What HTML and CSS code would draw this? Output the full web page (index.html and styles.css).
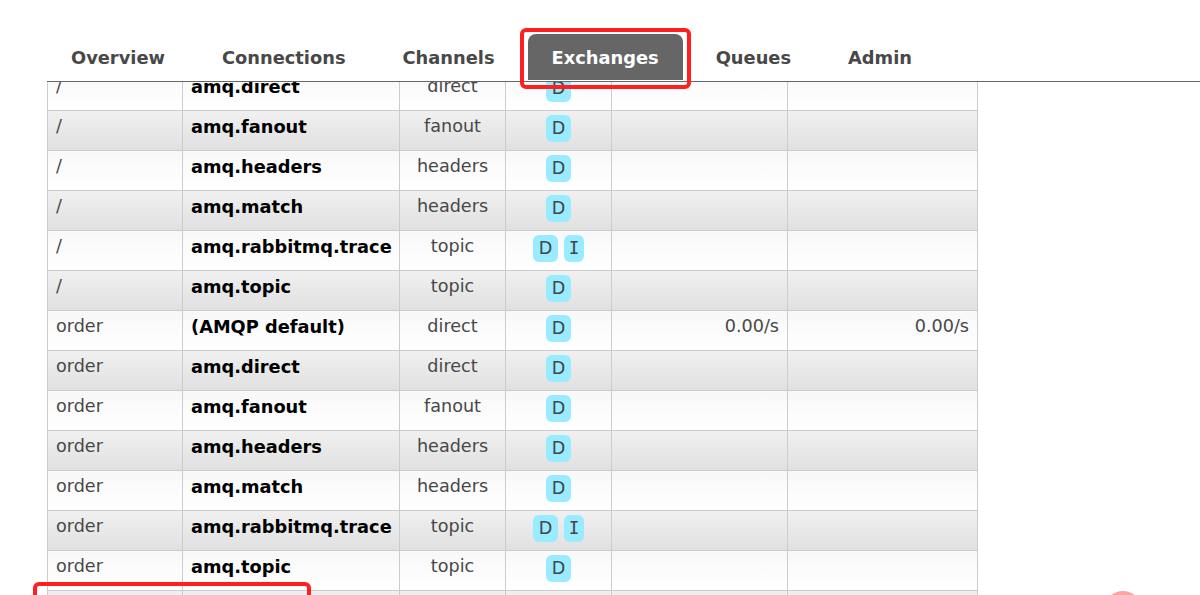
FILE: index.html
```html
<!DOCTYPE html>
<html>
<head>
<meta charset="utf-8">
<title>Exchanges</title>
<link rel="stylesheet" href="styles.css">
</head>
<body>
<div class="page">
  <header class="menu">
    <nav class="tabs">
      <a class="tab">Overview</a>
      <a class="tab">Connections</a>
      <a class="tab">Channels</a>
      <a class="tab selected">Exchanges</a>
      <a class="tab">Queues</a>
      <a class="tab">Admin</a>
    </nav>
  </header>
  <div class="list-wrap">
    <div class="list">
      <div class="row alt2"><div class="c vh">/</div><div class="c name">amq.direct</div><div class="c type">direct</div><div class="c feat"><span class="badge">D</span></div><div class="c rate"></div><div class="c rate"></div></div>
      <div class="row alt1"><div class="c vh">/</div><div class="c name">amq.fanout</div><div class="c type">fanout</div><div class="c feat"><span class="badge">D</span></div><div class="c rate"></div><div class="c rate"></div></div>
      <div class="row alt2"><div class="c vh">/</div><div class="c name">amq.headers</div><div class="c type">headers</div><div class="c feat"><span class="badge">D</span></div><div class="c rate"></div><div class="c rate"></div></div>
      <div class="row alt1"><div class="c vh">/</div><div class="c name">amq.match</div><div class="c type">headers</div><div class="c feat"><span class="badge">D</span></div><div class="c rate"></div><div class="c rate"></div></div>
      <div class="row alt2"><div class="c vh">/</div><div class="c name">amq.rabbitmq.trace</div><div class="c type">topic</div><div class="c feat"><span class="badge">D</span> <span class="badge internal">I</span></div><div class="c rate"></div><div class="c rate"></div></div>
      <div class="row alt1"><div class="c vh">/</div><div class="c name">amq.topic</div><div class="c type">topic</div><div class="c feat"><span class="badge">D</span></div><div class="c rate"></div><div class="c rate"></div></div>
      <div class="row alt2"><div class="c vh">order</div><div class="c name">(AMQP default)</div><div class="c type">direct</div><div class="c feat"><span class="badge">D</span></div><div class="c rate">0.00/s</div><div class="c rate">0.00/s</div></div>
      <div class="row alt1"><div class="c vh">order</div><div class="c name">amq.direct</div><div class="c type">direct</div><div class="c feat"><span class="badge">D</span></div><div class="c rate"></div><div class="c rate"></div></div>
      <div class="row alt2"><div class="c vh">order</div><div class="c name">amq.fanout</div><div class="c type">fanout</div><div class="c feat"><span class="badge">D</span></div><div class="c rate"></div><div class="c rate"></div></div>
      <div class="row alt1"><div class="c vh">order</div><div class="c name">amq.headers</div><div class="c type">headers</div><div class="c feat"><span class="badge">D</span></div><div class="c rate"></div><div class="c rate"></div></div>
      <div class="row alt2"><div class="c vh">order</div><div class="c name">amq.match</div><div class="c type">headers</div><div class="c feat"><span class="badge">D</span></div><div class="c rate"></div><div class="c rate"></div></div>
      <div class="row alt1"><div class="c vh">order</div><div class="c name">amq.rabbitmq.trace</div><div class="c type">topic</div><div class="c feat"><span class="badge">D</span> <span class="badge internal">I</span></div><div class="c rate"></div><div class="c rate"></div></div>
      <div class="row alt2"><div class="c vh">order</div><div class="c name">amq.topic</div><div class="c type">topic</div><div class="c feat"><span class="badge">D</span></div><div class="c rate"></div><div class="c rate"></div></div>
      <div class="row alt1"><div class="c vh">order</div><div class="c name">test.exchange</div><div class="c type">direct</div><div class="c feat"><span class="badge">D</span></div><div class="c rate"></div><div class="c rate"></div></div>
    </div>
  </div>
  <div class="mark mark-tab"></div>
  <div class="mark mark-row"></div>
  <div class="dot"></div>
</div>
</body>
</html>
```

FILE: styles.css
```css
* { box-sizing: border-box; }
html, body {
  margin: 0;
  padding: 0;
  background: #fff;
  height: 100%;
  overflow: hidden;
}
body {
  font-family: "DejaVu Sans", Verdana, sans-serif;
  font-size: 17.6px;
  color: #484848;
}
.page {
  position: relative;
  height: 595px;
  overflow: hidden;
}
.menu {
  margin-left: 47px;
  padding-top: 34px;
  height: 82px;
  border-bottom: 1px solid #666;
}
.tabs {
  display: flex;
  gap: 9px;
}
.tab {
  display: block;
  height: 46px;
  line-height: 47px;
  padding: 0 24px;
  font-size: 17.84px;
  font-weight: bold;
  color: #484848;
  border-radius: 8px 8px 0 0;
}
.tab.selected {
  background: #666;
  color: #fff;
}
.list-wrap {
  margin-left: 47px;
  overflow: hidden;
}
.list {
  margin-top: -11px;
  width: 931px;
}
.row {
  display: grid;
  grid-template-columns: 135px 217px 106px 106px 176px 190px;
  border-left: 1px solid #ccc;
  height: 40px;
}
.row.alt1 { background: linear-gradient(#f0f0f0, #e0e0e0); }
.row.alt2 { background: linear-gradient(#f8f8f8, #ffffff); }
.c {
  border-right: 1px solid #ccc;
  border-bottom: 1px solid #ccc;
  padding: 4px 8px 0;
  line-height: 23px;
  white-space: nowrap;
}
.name { font-weight: bold; color: #000; font-size: 17.8px; }
.type, .feat { text-align: center; }
.rate { text-align: right; }
.badge {
  display: inline-block;
  vertical-align: top;
  line-height: 19px;
  padding: 4px 6px;
  border-radius: 6px;
  background: #99ebff;
  color: #444;
}
.badge.internal {
  font-family: "DejaVu Sans Mono", monospace;
  padding: 4px 5px;
}
.mark {
  position: absolute;
  border: 4px solid #ff1f1f;
  border-radius: 6px;
}
.mark-tab {
  left: 520px;
  top: 28px;
  width: 171px;
  height: 61px;
}
.mark-row {
  left: 33px;
  top: 582px;
  width: 278px;
  height: 60px;
}
.dot {
  position: absolute;
  left: 1104px;
  top: 591px;
  width: 38px;
  height: 38px;
  border-radius: 50%;
  background: #ffa3a3;
}
```
